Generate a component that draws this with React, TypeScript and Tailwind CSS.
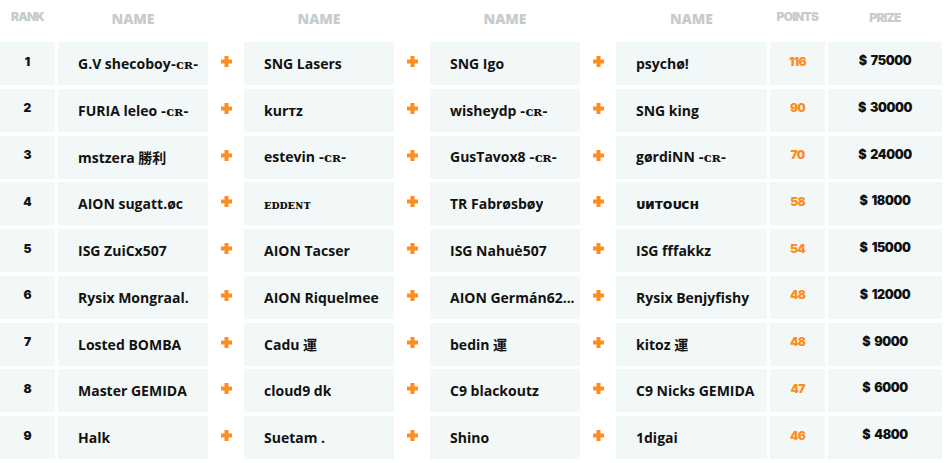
import { Fragment } from 'react';

interface Row {
  rank: number;
  names: string[];
  points: number;
  prize: string;
}

const rows: Row[] = [
  { rank: 1, names: ['G.V shecoboy-ᴄʀ-', 'SNG Lasers', 'SNG Igo', 'psychø!'], points: 116, prize: '$ 75000' },
  { rank: 2, names: ['FURIA leleo -ᴄʀ-', 'kurтz', 'wisheydp -ᴄʀ-', 'SNG king'], points: 90, prize: '$ 30000' },
  { rank: 3, names: ['mstzera 勝利', 'estevin -ᴄʀ-', 'GusTavox8 -ᴄʀ-', 'gørdiNN -ᴄʀ-'], points: 70, prize: '$ 24000' },
  { rank: 4, names: ['AION sugatt.øc', 'ᴇᴅᴅᴇɴᴛ', 'TR Fabrøsbøy', 'ᴜᴎᴛᴏᴜᴄʜ'], points: 58, prize: '$ 18000' },
  { rank: 5, names: ['ISG ZuiCx507', 'AION Tacser', 'ISG Nahuė507', 'ISG fffakkz'], points: 54, prize: '$ 15000' },
  { rank: 6, names: ['Rysix Mongraal.', 'AION Riquelmee', 'AION Germán62...', 'Rysix Benjyfishy'], points: 48, prize: '$ 12000' },
  { rank: 7, names: ['Losted BOMBA', 'Cadu 運', 'bedin 運', 'kitoz 運'], points: 48, prize: '$ 9000' },
  { rank: 8, names: ['Master GEMIDA', 'cloud9 dk', 'C9 blackoutz', 'C9 Nicks GEMIDA'], points: 47, prize: '$ 6000' },
  { rank: 9, names: ['Halk', 'Suetam .', 'Shino', '1digai'], points: 46, prize: '$ 4800' },
];

const headFont = { fontFamily: 'Inter, "Liberation Sans", sans-serif' };
const nameFont = { fontFamily: '"Open Sans", "DejaVu Sans", "Noto Sans CJK SC", sans-serif' };
const serifFont = { fontFamily: '"DejaVu Serif", "Liberation Serif", serif' };
const numFont = { fontFamily: 'Inter, "Liberation Sans", sans-serif' };

function Plus() {
  return (
    <svg width="11" height="11" viewBox="0 0 11 11">
      <rect x="3.5" y="0" width="4" height="11" fill="#fd8d1f" />
      <rect x="0" y="3.5" width="11" height="4" fill="#fd8d1f" />
    </svg>
  );
}

function NameText({ name }: { name: string }) {
  if (name === 'ᴇᴅᴅᴇɴᴛ') {
    return (
      <span className="text-[12px] font-bold" style={serifFont}>
        {name}
      </span>
    );
  }
  const idx = name.indexOf('-ᴄʀ-');
  if (idx < 0) return <>{name}</>;
  return (
    <>
      {name.slice(0, idx)}
      <span className="text-[13px] font-bold" style={serifFont}>
        -ᴄʀ-
      </span>
    </>
  );
}

function NameCell({ name, wide }: { name: string; wide?: boolean }) {
  return (
    <div
      className={`${wide ? 'w-[151px]' : 'w-[150px]'} h-full bg-[#f2f7f7] flex items-center pl-[20px] pr-[2px]`}
    >
      <span
        className="text-[14px] font-bold text-[#121212] whitespace-nowrap overflow-hidden text-ellipsis"
        style={nameFont}
      >
        <NameText name={name} />
      </span>
    </div>
  );
}

export default function App() {
  return (
    <div className="w-[947px] h-[463px] bg-white overflow-hidden">
      <div className="flex h-[42px] text-[#c6cbcd]" style={headFont}>
        <div className="w-[55px] pt-[8px] text-center text-[12px] font-black tracking-[-0.06em]">RANK</div>
        {[0, 1, 2, 3].map((i) => (
          <Fragment key={i}>
            <div
              className={`${i === 0 ? 'ml-[3px]' : ''} ${i === 3 ? 'w-[151px]' : 'w-[150px]'} pt-[8px] text-center text-[14px] font-extrabold`}
              style={nameFont}
            >
              NAME
            </div>
            {i < 3 && <div className="w-[36px]" />}
          </Fragment>
        ))}
        <div className="ml-[3px] w-[55px] pt-[8px] text-center text-[12px] font-black tracking-[-0.06em]">POINTS</div>
        <div className="ml-[3px] w-[114px] pt-[9px] text-center text-[12px] font-black tracking-[-0.06em]">PRIZE</div>
      </div>

      <div className="flex flex-col gap-[3.75px]">
        {rows.map((r) => (
          <div key={r.rank} className="flex h-[43px]">
            <div className="w-[55px] h-full bg-[#f2f7f7] flex items-center justify-center pb-[4px]">
              <span className="text-[12px] font-black text-[#111]" style={numFont}>{r.rank}</span>
            </div>
            {r.names.map((n, i) => (
              <Fragment key={i}>
                <div className={i === 0 ? 'ml-[3px]' : ''}>
                  <NameCell name={n} wide={i === 3} />
                </div>
                {i < 3 && (
                  <div className="w-[36px] h-full flex items-center justify-center pb-[4px]">
                    <Plus />
                  </div>
                )}
              </Fragment>
            ))}
            <div className="ml-[3px] w-[55px] h-full bg-[#f2f7f7] flex items-center justify-center pb-[4px]">
              <span className="text-[12px] font-black text-[#fd8d1f] tracking-[-0.06em]" style={numFont}>{r.points}</span>
            </div>
            <div className="ml-[3px] w-[114px] h-full bg-[#f2f7f7] flex items-center justify-center pb-[4px]">
              <span
                className="text-[12.5px] font-black text-[#111] tracking-[-0.03em] whitespace-pre [word-spacing:2px]"
                style={numFont}
              >
                {r.prize}
              </span>
            </div>
          </div>
        ))}
      </div>
    </div>
  );
}
